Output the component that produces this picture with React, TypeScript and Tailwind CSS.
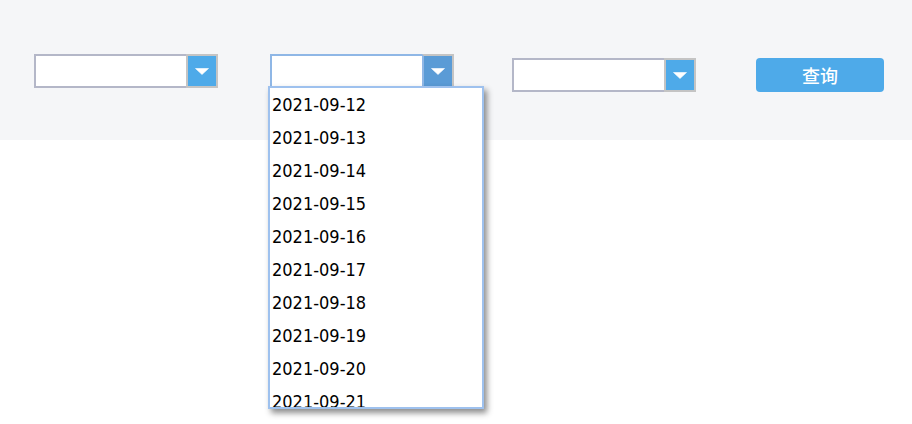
import React from "react";

const dates = [
  "2021-09-12",
  "2021-09-13",
  "2021-09-14",
  "2021-09-15",
  "2021-09-16",
  "2021-09-17",
  "2021-09-18",
  "2021-09-19",
  "2021-09-20",
  "2021-09-21",
];

function Arrow() {
  return (
    <svg width="14" height="7" viewBox="0 0 14 7">
      <path d="M0.5 0.5 L13.5 0.5 L7 6.5 Z" fill="#ffffff" strokeLinejoin="round" stroke="#ffffff" strokeWidth="0.6" />
    </svg>
  );
}

function Select({ focused = false }: { focused?: boolean }) {
  return (
    <div className="flex h-[34px] w-[184px]">
      <div
        className={
          focused
            ? "flex-1 border-2 border-r-0 border-[#8fb7e6] bg-white"
            : "flex-1 border-2 border-r-0 border-[#b4b7c8] bg-white"
        }
      />
      <div
        className={
          focused
            ? "flex w-[32px] items-center justify-center border-2 border-l-[#8fb7e6] border-t-[#c4c4c4] border-r-[#c4c4c4] border-b-[#c4c4c4] bg-[#5a9bd6]"
            : "flex w-[32px] items-center justify-center border-2 border-[#c4c4c4] bg-[#4eaae9]"
        }
      >
        <Arrow />
      </div>
    </div>
  );
}

export default function App() {
  return (
    <div className="h-[424px] w-[912px] bg-white" style={{ fontFamily: '"DejaVu Sans", sans-serif' }}>
      <div className="flex h-[140px] items-start bg-[#f5f6f8] pl-[34px]">
        <div className="mt-[54px]">
          <Select />
        </div>
        <div className="relative ml-[52px] mt-[54px]">
          <Select focused />
          <div className="absolute left-[-2px] top-[32px] h-[323px] w-[216px] overflow-hidden border-2 border-[#9ec1ee] bg-white shadow-[3px_4px_6px_rgba(0,0,0,0.45)]">
            <div>
              {dates.map((d) => (
                <div
                  key={d}
                  className="h-[33px] pl-[2px] text-[18px] leading-[33px] text-black"
                  style={{ fontStretch: "condensed", fontFamily: '"DejaVu Sans Condensed", "DejaVu Sans", sans-serif' }}
                >
                  {d}
                </div>
              ))}
            </div>
          </div>
        </div>
        <div className="ml-[58px] mt-[58px]">
          <Select />
        </div>
        <button
          className="ml-[60px] mt-[58px] flex h-[34px] w-[128px] items-center justify-center rounded-[4px] bg-[#4eaae9] text-[18px] font-medium text-white"
          style={{ fontFamily: '"Noto Sans CJK SC", sans-serif' }}
        >
          查询
        </button>
      </div>
    </div>
  );
}
